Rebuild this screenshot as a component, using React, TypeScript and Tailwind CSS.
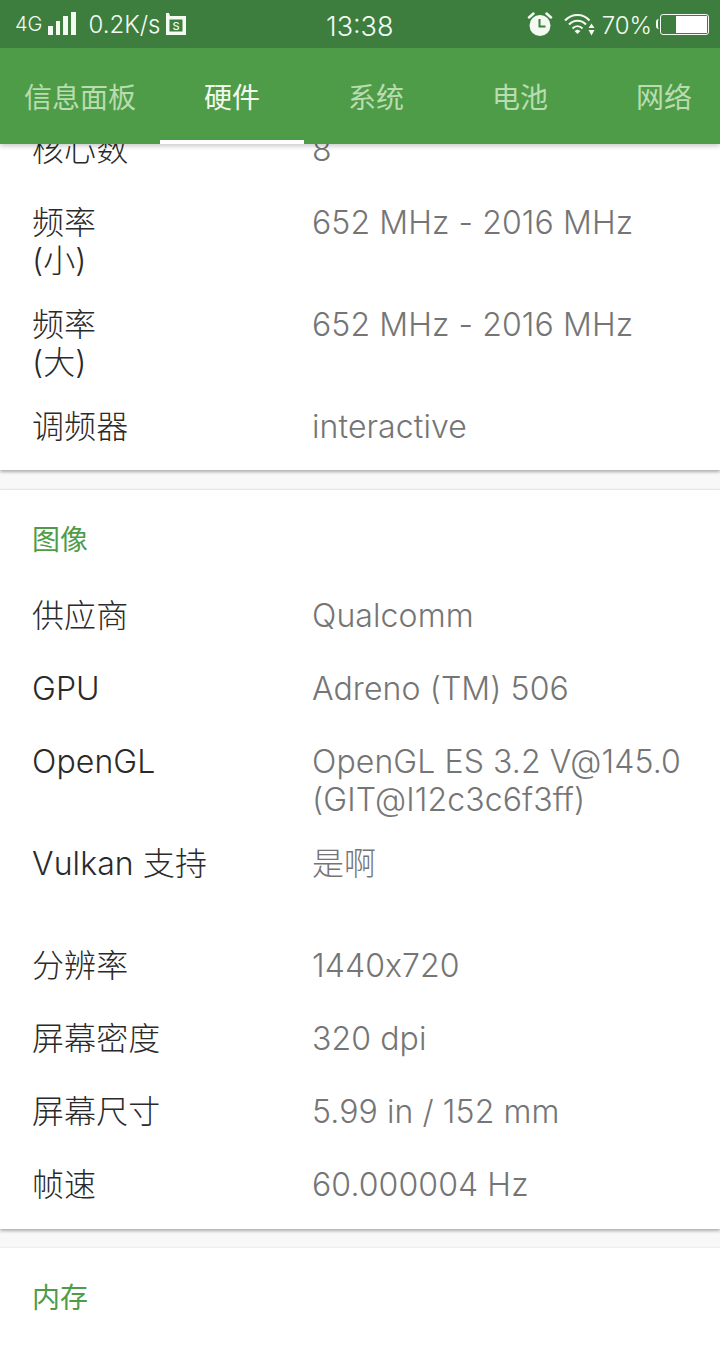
const FONT = "font-['Inter','Noto_Sans_CJK_SC',sans-serif]";

type Row = { label: React.ReactNode; value: React.ReactNode; tall?: boolean };

const cpuRows: Row[] = [
  { label: '核心数', value: '8' },
  { label: <>频率<br />(小)</>, value: '652 MHz - 2016 MHz' },
  { label: <>频率<br />(大)</>, value: '652 MHz - 2016 MHz' },
  { label: '调频器', value: 'interactive' },
];

const gpuRows: Row[] = [
  { label: '供应商', value: 'Qualcomm' },
  { label: 'GPU', value: 'Adreno (TM) 506' },
  { label: 'OpenGL', value: <>OpenGL ES 3.2 V@145.0<br />(GIT@I12c3c6f3ff)</> },
  { label: 'Vulkan 支持', value: '是啊', tall: true },
  { label: '分辨率', value: '1440x720' },
  { label: '屏幕密度', value: '320 dpi' },
  { label: '屏幕尺寸', value: '5.99 in / 152 mm' },
  { label: '帧速', value: '60.000004 Hz' },
];

function InfoRow({ label, value, tall }: Row) {
  return (
    <div
      className={`flex text-[32px] font-light leading-[38px] tracking-[0.1px] [font-feature-settings:'calt'_0] ${
        tall ? 'min-h-[76px]' : 'min-h-[47px]'
      }`}
    >
      <div className="w-[280px] shrink-0 text-[#2a2a2a]">{label}</div>
      <div className="flex-1 whitespace-nowrap text-[#757575]">{value}</div>
    </div>
  );
}

function SignalBars() {
  return (
    <svg width="30" height="24" viewBox="0 0 30 24" fill="#f4faf2">
      <rect x="1" y="14" width="5" height="9" />
      <rect x="9" y="9" width="4" height="14" />
      <rect x="16" y="4" width="5" height="19" />
      <rect x="24" y="0" width="5" height="23" />
    </svg>
  );
}

// square with a tab on its top left, S inside
function SimIcon() {
  return (
    <svg width="20" height="23" viewBox="0 0 20 23">
      <path fillRule="evenodd" d="M0 0h3l1 3h16v19H0ZM3.500 6.500v12h13v-12Z" fill="#f4faf2" />
      <text x="10" y="16.500" textAnchor="middle" fontSize="11" fontWeight="500" fill="#f4faf2">S</text>
    </svg>
  );
}

function AlarmIcon() {
  return (
    <svg width="26" height="24" viewBox="0 0 26 24">
      <circle cx="13" cy="13.500" r="10.500" fill="#f4faf2" />
      <path d="M2 5.500 6.500 1.500M24 5.500 19.500 1.500" stroke="#f4faf2" strokeWidth="2.500" strokeLinecap="round" />
      <path d="M12.500 7v7.500h6" fill="none" stroke="#3d7e3f" strokeWidth="2" />
    </svg>
  );
}

function WifiIcon() {
  return (
    <svg width="32" height="24" viewBox="0 0 32 24" fill="none" stroke="#f4faf2" strokeWidth="2">
      <path d="M1 8.500C8 1 19 1 25.500 8.500" />
      <path d="M5 12.500C10 7.500 17 7.500 22 12.500" />
      <path d="M8.500 16.500C11.500 13.500 15.500 13.500 18.500 16.500" />
      <path d="M10.500 19 13.500 22 16.500 19 13.500 17.500Z" fill="#f4faf2" stroke="none" />
      <path d="M27.500 11.500 24.500 16h6ZM27.500 23.500 24.500 18h6Z" fill="#f4faf2" stroke="none" />
    </svg>
  );
}

function Battery() {
  return (
    <div className="flex items-center">
      <div className="h-[10px] w-[3px] rounded-l-[3px] border-l-2 border-[#f4faf2]" />
      <div className="ml-[1px] flex h-[21px] w-[49px] justify-end rounded-[3px] border border-[#f4faf2] p-[1px]">
        <div className="h-full w-[31px] bg-white" />
      </div>
    </div>
  );
}

function Header() {
  const tabs = [
    { name: '信息面板', width: 'w-[160px]' },
    { name: '硬件', width: 'w-[144px]', active: true },
    { name: '系统', width: 'w-[144px]' },
    { name: '电池', width: 'w-[144px]' },
    { name: '网络', width: 'w-[144px]' },
  ];
  return (
    <div className="relative z-10 shrink-0 shadow-[0_2px_5px_rgba(0,0,0,0.22)]">
      <div className="relative flex h-[48px] items-center bg-[#3d7e3f] pl-[15px] pr-[11px] text-[#f4faf2]">
        <span className="text-[20px] font-light">4G</span>
        <div className="ml-[5px]"><SignalBars /></div>
        <span className="ml-[11px] pt-[1px] text-[24px] font-light">0.2K/s</span>
        <div className="ml-[6px] flex"><SimIcon /></div>
        <span className="absolute left-[326px] top-[10px] text-[27px] font-light leading-[34px]">13:38</span>
        <div className="ml-auto"><AlarmIcon /></div>
        <div className="ml-[11px]"><WifiIcon /></div>
        <span className="ml-[6px] pt-[3px] text-[24px] font-light">70%</span>
        <div className="ml-[4px]"><Battery /></div>
      </div>
      <div className="flex h-[96px] overflow-hidden bg-[#4f9c48]">
        {tabs.map((t) => (
          <div
            key={t.name}
            className={`relative flex shrink-0 items-center justify-center pt-[4px] text-[28px] ${t.width} ${
              t.active ? 'text-[#f1f8ee]' : 'text-[#b9dcb1]'
            }`}
          >
            {t.name}
            {t.active && <div className="absolute inset-x-0 bottom-0 h-[4px] bg-white" />}
          </div>
        ))}
      </div>
    </div>
  );
}

function Card({ title, rows, className }: { title?: string; rows: Row[]; className?: string }) {
  return (
    <div className={`bg-white shadow-[0_2px_3px_rgba(0,0,0,0.3)] ${className ?? ''}`}>
      {title && <div className="pl-[32px] pt-[31px] text-[28px] leading-[38px] text-[#4f9c48]">{title}</div>}
      {rows.length > 0 && (
        <div className={`flex flex-col gap-[26px] pl-[32px] ${title ? 'pb-[16px] pt-[38px]' : 'pb-[15px]'}`}>
          {rows.map((r, i) => (
            <InfoRow key={i} {...r} />
          ))}
        </div>
      )}
    </div>
  );
}

export default function App() {
  return (
    <div className={`flex h-[1356px] w-[720px] flex-col overflow-hidden bg-[#f8f8f8] ${FONT}`}>
      <Header />
      <div className="-mt-[13px] flex flex-col">
        <Card rows={cpuRows} />
        <Card title="图像" rows={gpuRows} className="mt-[19px] border-t border-[#e6e6e6]" />
        <Card title="内存" rows={[]} className="mt-[18px] h-[200px] border-t border-[#efefef]" />
      </div>
    </div>
  );
}
